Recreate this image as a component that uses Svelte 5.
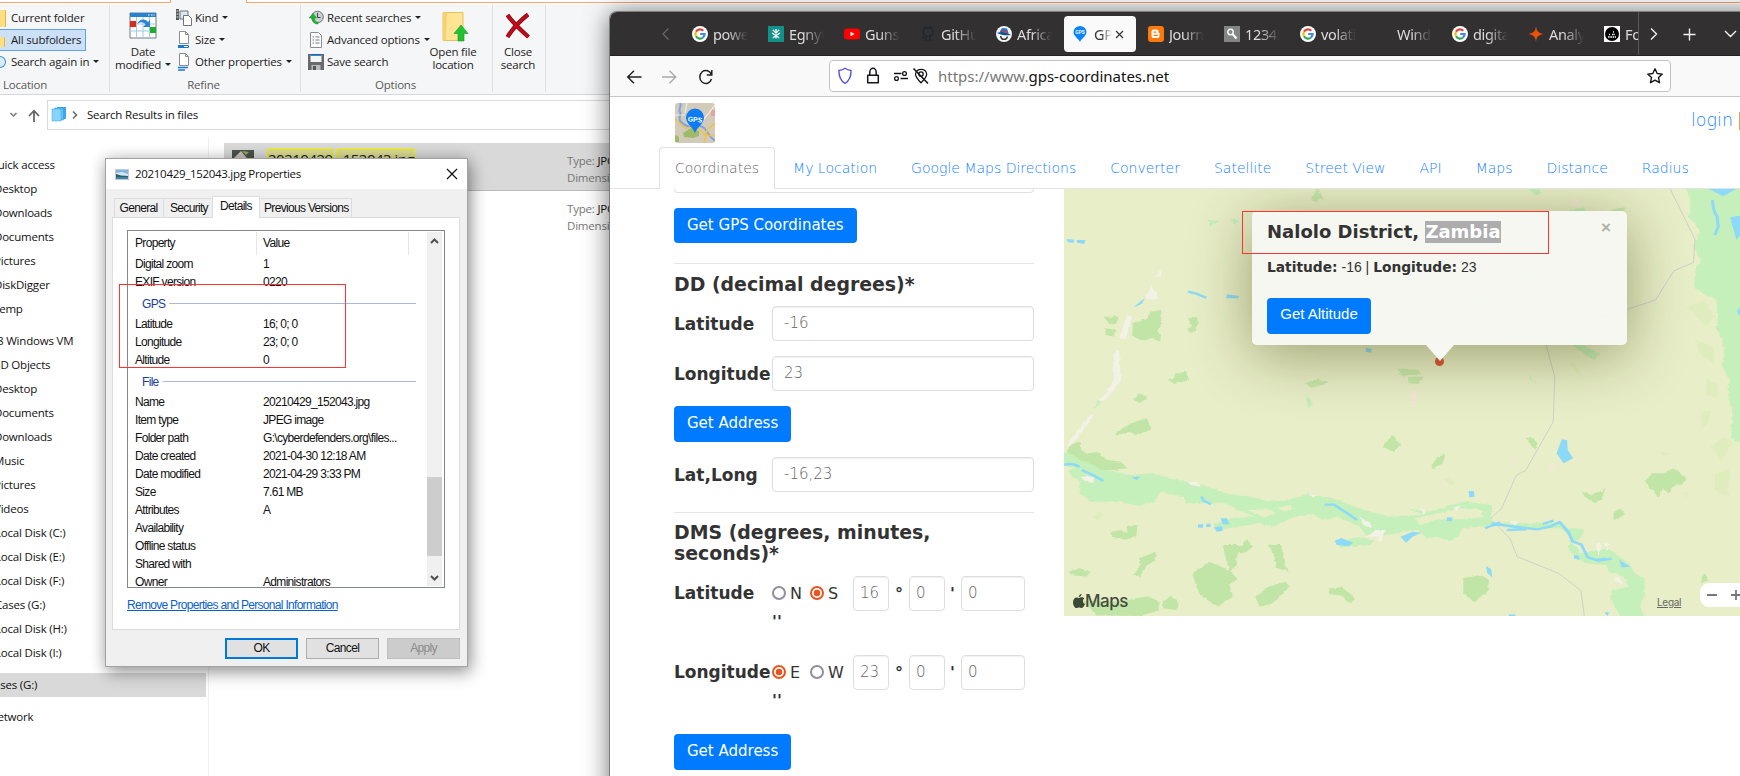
<script>
  const sidebar = [
    { t: 'Quick access', l: -11 }, { t: 'Desktop', l: -6 }, { t: 'Downloads', l: -6 }, { t: 'Documents', l: -6 },
    { t: 'Pictures', l: -6 }, { t: 'DiskDigger', l: -6 }, { t: 'Temp', l: -7 },
    { t: '8 Windows VM', l: -3, lead: true }, { t: '3D Objects', l: -6 }, { t: 'Desktop', l: -6 }, { t: 'Documents', l: -6 },
    { t: 'Downloads', l: -6 }, { t: 'Music', l: -6 }, { t: 'Pictures', l: -6 }, { t: 'Videos', l: -6 },
    { t: 'Local Disk (C:)', l: -5 }, { t: 'Local Disk (E:)', l: -5 }, { t: 'Local Disk (F:)', l: -5 }, { t: 'Cases (G:)', l: -5 },
    { t: 'Local Disk (H:)', l: -5 }, { t: 'Local Disk (I:)', l: -5 },
    { t: 'Cases (G:)', l: -13, lead: true, sel: true }, { t: 'Network', l: -11, lead: true }
  ];
  const fileProps = [
    ['Name', '20210429_152043.jpg'], ['Item type', 'JPEG image'], ['Folder path', 'G:\\cyberdefenders.org\\files...'],
    ['Date created', '2021-04-30 12:18 AM'], ['Date modified', '2021-04-29 3:33 PM'], ['Size', '7.61 MB'],
    ['Attributes', 'A'], ['Availability', ''], ['Offline status', ''], ['Shared with', ''], ['Owner', 'Administrators']
  ];
  const gpsProps = [['Latitude', '16; 0; 0'], ['Longitude', '23; 0; 0'], ['Altitude', '0']];
  const tabs = [
    ['google', 'power'], ['egnyte', 'Egnyt'], ['youtube', 'Guns a'], ['github', 'GitHub'], ['africa', 'Africa'], ['gps', 'GPS'],
    ['blogger', 'Journa'], ['search', '12345'], ['google', 'volatil'], ['none', 'Windo'], ['google', 'digital'], ['spark', 'Analys'], ['face', 'For']
  ];
  const nav = ['Coordinates', 'My Location', 'Google Maps Directions', 'Converter', 'Satellite', 'Street View', 'API', 'Maps', 'Distance', 'Radius'];
  const dms = [
    { label: 'Latitude', a: 'N', b: 'S', first: false, deg: '16' },
    { label: 'Longitude', a: 'E', b: 'W', first: true, deg: '23' }
  ];
</script>

{#snippet caret()}<i class="caret"></i>{/snippet}
{#snippet page(kind)}
  <svg width="16" height="18" viewBox="0 0 16 18">
    <path d="M3.500 .5h6l3 3v9h-9z" fill="#fff" stroke="#8a8f94" />
    <path d="M9.500 .5v3h3" fill="none" stroke="#8a8f94" />
    {#if kind === 'size'}<path d="M2.500 14.500h10v2h-10z" fill="#fff" stroke="#1979ca" /><path d="M2 14h6v3H2z" fill="#1979ca" />{/if}
    {#if kind === 'other'}<path d="M2 14.500h10M2 17h7" stroke="#1979ca" stroke-width="1.300" />{/if}
  </svg>
{/snippet}

<div class="screen">
  <section class="explorer">
    <div class="topline"><span class="la"></span><span class="notch"></span><span class="lb"></span></div>
    <div class="ribbon">
      <div class="group loc">
        <div class="col">
          <div class="rb"><i class="fold"></i>Current folder</div>
          <div class="rb on"><i class="fold low"></i>All subfolders</div>
          <div class="rb"><i class="lens"></i>Search again in {@render caret()}</div>
        </div>
        <footer>Location</footer>
      </div>
      <div class="group refine">
        <div class="cols">
          <div class="big">
            <svg width="28" height="28" viewBox="0 0 28 28">
              <path d="M1 1h26v25H1z" fill="#fff" stroke="#75797d" /><path d="M1 1h26v4H1z" fill="#2384d1" />
              <path d="M19 3h1.500M22 3h1.500M24.500 3h1" stroke="#fff" />
              <path d="M7.500 5v21M14 5v21M20.500 5v21M1 12h26M1 19h26" stroke="#9fcbe6" />
              <path d="M1 9h6v6H1z" fill="#dc2a20" /><path d="M21 15h6v6h-6z" fill="#1cae31" />
              <path d="M8 12c2-5 8-6 11-2l2-2v7h-7l2.500-2.500c-2-3-5-3-8.500-.5z" fill="#2b83d3" />
            </svg>
            <span>Date</span><span>modified {@render caret()}</span>
          </div>
          <div class="col">
            <div class="rb"><svg width="16" height="18" viewBox="0 0 16 18"><path d="M0 0h3v11H0z" fill="#555" /><path d="M.5 2h2M.5 5h2M.5 8h2" stroke="#ddd" /><path d="M4 2h8v8H4z" fill="#dbe8f2" stroke="#6d747a" /><path d="M7.500 6.500h5l3 3v7h-8z" fill="#fff" stroke="#6d747a" /></svg>Kind {@render caret()}</div>
            <div class="rb">{@render page('size')}Size {@render caret()}</div>
            <div class="rb">{@render page('other')}Other properties {@render caret()}</div>
          </div>
        </div>
        <footer>Refine</footer>
      </div>
      <div class="group opts">
        <div class="cols">
          <div class="col">
            <div class="rb"><svg width="16" height="16" viewBox="0 0 16 16"><circle cx="9.500" cy="7" r="5.800" fill="#c9cfd2" stroke="#6c7478" /><path d="M9.500 3v4.500h3" fill="none" stroke="#444" /><path d="M10 14c-4 0-6-2.500-6-6H1.200L5 3.500 8.500 8H6.300c0 3 1.700 4 3.700 4.500z" fill="#20b52e" stroke="#108a1c" stroke-width=".5" /></svg>Recent searches {@render caret()}</div>
            <div class="rb"><svg width="16" height="18" viewBox="0 0 16 18"><path d="M2.500 1.500h8l3 3v12h-11z" fill="#fff" stroke="#8a8f94" /><path d="M4.500 6h1.500M4.500 9h1.500M4.500 12h1.500M7.500 6h4M7.500 9h4M7.500 12h4" stroke="#777" /></svg>Advanced options {@render caret()}</div>
            <div class="rb"><svg width="16" height="16" viewBox="0 0 16 16"><path d="M0 0h16v16H0z" fill="#68696c" /><path d="M2.500 1h11v7h-11z" fill="#f4f4f4" /><path d="M2.500 0h11v1.800h-11z" fill="#1569b5" /><path d="M3.500 11h9v5h-9z" fill="#b9bbbd" /><path d="M5 12h3v4H5z" fill="#555" /></svg>Save search</div>
          </div>
          <div class="big open">
            <svg width="28" height="32" viewBox="0 0 28 32"><path d="M2 1.500h20v28H2z" fill="#ffe593" stroke="#e7c25c" /><path d="M2 1.500h4l-1 28H2z" fill="#f5d26f" /><path d="M20 14l7 8.500h-4V30h-6v-7.500h-4z" fill="#21c42f" stroke="#18942a" stroke-width=".6" /></svg>
            <span>Open file</span><span>location</span>
          </div>
        </div>
        <footer>Options</footer>
      </div>
      <div class="group close">
        <div class="big">
          <svg width="28" height="28" viewBox="0 0 28 28"><path d="M3.500 3c4 6 12 14 21 22M24 2.500C17 8 9 16 3.500 25" fill="none" stroke="#7d0d16" stroke-width="4.200" /><path d="M3.500 3c4 6 12 14 21 22M24 2.500C17 8 9 16 3.500 25" fill="none" stroke="#c9081a" stroke-width="2.600" /></svg>
          <span>Close</span><span>search</span>
        </div>
      </div>
    </div>
    <div class="addr">
      <svg width="47" height="30" viewBox="0 0 47 30"><path d="M10.500 13l3 3 3-3" fill="none" stroke="#777" stroke-width="1.500" /><path d="M34 22V11M29 16l5-5.300L39 16" fill="none" stroke="#666" stroke-width="1.800" /></svg>
      <div class="box">
        <svg width="16" height="16" viewBox="0 0 16 16"><path d="M6 1h9v12H6z" fill="#3aa7ea" /><path d="M3.500 2h9v12h-9z" fill="#62c3f5" stroke="#2c97da" stroke-width=".5" /><path d="M1 3h9v12H1z" fill="#86d4fb" stroke="#3aa0dc" stroke-width=".5" /></svg>
        <svg width="10" height="12" viewBox="0 0 10 12"><path d="M3 2.500L6.500 6 3 9.500" fill="none" stroke="#666" stroke-width="1.500" /></svg>
        <span>Search Results in files</span>
      </div>
    </div>
    <div class="main">
      <nav class="side">
        {#each sidebar as s}
          <div class="item" class:lead={s.lead} class:sel={s.sel}><span style="margin-left:{s.l}px">{s.t}</span></div>
        {/each}
      </nav>
      <div class="files">
        <div class="row sel">
          <svg width="22" height="40" viewBox="0 0 22 40"><path d="M0 0h22v40H0z" fill="#4d5446" /><path d="M1 9L9 1l10 12v27H0z" fill="#c9c3c0" /><path d="M10 1l4 4 3-3z" fill="#8bab66" /></svg>
          <div class="name"><mark>20210429</mark><mark>_152043.jpg</mark></div>
          <div class="meta"><p>Type: <b>JPG File</b></p><p>Dimensions: </p></div>
        </div>
        <div class="row"><div class="meta"><p>Type: <b>JPG File</b></p><p>Dimensions: </p></div></div>
      </div>
    </div>
  </section>

  <section class="dialog">
    <header>
      <svg width="14" height="11" viewBox="0 0 14 11"><path d="M0 0h14v11H0z" fill="#c6cbd0" /><path d="M1 1h12v9H1z" fill="#7fb6e6" /><path d="M1 4l6-1 6 2v2H1z" fill="#d5e6f2" /><path d="M1 5l5 1.500 7 .5v1.500H1z" fill="#2c5f57" /><path d="M1 8h12v2H1z" fill="#3c83b5" /></svg>
      <span>20210429_152043.jpg Properties</span>
      <svg width="12" height="12" viewBox="0 0 12 12"><path d="M1 1l10 10M11 1L1 11" stroke="#111" stroke-width="1.200" /></svg>
    </header>
    <div class="dtabs"><span>General</span><span>Security</span><span class="act">Details</span><span>Previous Versions</span></div>
    <div class="sheet">
      <div class="list">
        <div class="content">
          <div class="pr head"><span>Property</span><span>Value</span></div>
          <div class="pr"><span>Digital zoom</span><span>1</span></div>
          <div class="pr cut"><span>EXIF version</span><span>0220</span></div>
          <div class="cat"><span>GPS</span><i></i></div>
          {#each gpsProps as [k, v]}<div class="pr"><span>{k}</span><span>{v}</span></div>{/each}
          <div class="cat file"><span>File</span><i></i></div>
          {#each fileProps as [k, v]}<div class="pr"><span>{k}</span><span>{v}</span></div>{/each}
        </div>
        <div class="scroll">
          <svg width="15" height="18" viewBox="0 0 15 18"><path d="M4 11l3.500-3.500L11 11" fill="none" stroke="#505050" stroke-width="2" /></svg>
          <i></i>
          <svg width="15" height="18" viewBox="0 0 15 18"><path d="M4 8l3.500 3.500L11 8" fill="none" stroke="#505050" stroke-width="2" /></svg>
        </div>
      </div>
      <span class="link">Remove Properties and Personal Information</span>
    </div>
    <div class="btns"><span class="ok">OK</span><span>Cancel</span><span class="dis">Apply</span></div>
    <div class="mark-gps"></div>
  </section>

  <section class="browser">
    <div class="tabbar">
      <svg class="prev" width="12" height="16" viewBox="0 0 12 16"><path d="M8.500 2.500L3 8l5.500 5.500" fill="none" stroke="#6a6768" stroke-width="1.300" /></svg>
      {#each tabs as [icon, label]}
        <div class="tab" class:active={icon === 'gps'}>
          <svg width="16" height="16" viewBox="0 0 16 16">
            {#if icon === 'google'}
              <circle cx="8" cy="8" r="8" fill="#fff" />
              <g fill="none" stroke-width="2.200"><path d="M4 5.700A4.600 4.600 0 0 1 11.300 4.700" stroke="#ea4335" /><path d="M4 5.700a4.600 4.600 0 0 0 0 4.600" stroke="#fbbc05" /><path d="M4 10.300a4.600 4.600 0 0 0 7 1.200" stroke="#34a853" /><path d="M8.200 8h4.400a4.600 4.600 0 0 1-1.600 3.500" stroke="#4285f4" /></g>
            {:else if icon === 'egnyte'}
              <path d="M0 0h16v16H0z" fill="#12918b" /><path d="M8 3v2.500M8 12.500V9.500L4 7M8 9.500L12 7M4.800 3.800L8 7l3.200-3.200M4.800 12L8 9.500l3.200 2.500" fill="none" stroke="#fff" stroke-width="1.300" />
            {:else if icon === 'youtube'}
              <rect y="2.500" width="16" height="11" rx="3" fill="#f00" /><path d="M6.500 5.800v4.400L10.500 8z" fill="#fff" />
            {:else if icon === 'github'}
              <path d="M6 15v-2.500c-3 .5-2.500-1.500-4-2M10 15v-3c0-1-.3-1.400-.7-1.800 4-.5 4.500-5 2.500-6.700.2-1 0-1.700-.3-2.300-1 0-1.700.6-2.300 1H6.800c-.6-.4-1.300-1-2.300-1-.3.600-.5 1.300-.3 2.300-2 1.700-1.500 6.200 2.500 6.700-.4.400-.7 1-.7 1.800" fill="none" stroke="#24272b" stroke-width="1.700" />
            {:else if icon === 'africa'}
              <circle cx="8" cy="8" r="8" fill="#f3f6f8" /><path d="M3.500 6L6 2l5 .5L12.500 7z" fill="#2275c9" /><path d="M1 7c4-2 10-1 14 2-4 .5-10 .5-14-2z" fill="#15508f" /><path d="M4.500 10c1 4.500 6 4.500 7 .5" fill="none" stroke="#333" stroke-width="1.300" /><path d="M5 5l7 2v-1.200L5.500 4z" fill="#d33" />
            {:else if icon === 'gps'}
              <path d="M8 16C6 12 1.500 10 1.500 6A6.500 6 0 0 1 14.500 6C14.500 10 10 12 8 16z" fill="#0a84ff" /><text x="8" y="8" font-size="4.500" font-weight="700" text-anchor="middle" fill="#fff">GPS</text>
            {:else if icon === 'blogger'}
              <rect width="16" height="16" rx="3" fill="#ff7a0c" /><path d="M5.500 3.500h3a2 2 0 0 1 2 2V6c0 .5.300.8 1 1v3a2 2 0 0 1-2 2h-4a2 2 0 0 1-2-2V5.500a2 2 0 0 1 2-2z" fill="#fff" /><path d="M6 6.200h2M6 9.400h3.300" stroke="#ff7a0c" stroke-width="1.200" stroke-linecap="round" />
            {:else if icon === 'search'}
              <path d="M0 0h16v16H0z" fill="#858585" /><circle cx="6.500" cy="6" r="2.700" fill="none" stroke="#fff" stroke-width="1.400" /><path d="M8.500 8l4 4.500" stroke="#fff" stroke-width="2" />
            {:else if icon === 'spark'}
              <path d="M8 0c.6 5 2 7 7.500 8C10 9 8.600 11 8 16 7.400 11 6 9 .5 8 6 7 7.400 5 8 0z" fill="#ee5007" />
            {:else if icon === 'face'}
              <path d="M0 0h16v16H0z" fill="#fff" /><circle cx="8" cy="8" r="7" fill="#000" /><path d="M4 11h8M5 8.500h1M8 8.500h3M9 6h1" stroke="#fff" stroke-width="1.600" stroke-dasharray="1.600 .7" />
            {/if}
          </svg>
          <span>{label}</span>
          {#if icon === 'gps'}<svg class="x" width="9" height="9" viewBox="0 0 9 9"><path d="M1 1l7 7M8 1L1 8" stroke="#333" stroke-width="1.200" /></svg>{/if}
        </div>
      {/each}
      <div class="tabend">
        <svg width="101" height="43" viewBox="0 0 101 43"><path d="M12 16.500l5.500 5.500-5.500 5.500M44.500 22.500h12M50.500 16.500v12M86 19l5.500 5.500L97 19" fill="none" stroke="#f2f2f2" stroke-width="1.400" /></svg>
      </div>
    </div>
    <div class="toolbar">
      <svg class="navs" width="92" height="18" viewBox="0 0 92 18"><g fill="none" stroke-width="1.400"><path d="M15.500 9H2M8 2.800L1.700 9 8 15.200" stroke="#222" /><path d="M36 9h13.500M43.500 2.800L49.800 9l-6.300 6.200" stroke="#aaa" /><path d="M85.500 7a6 6.500 0 1 0 0 4M85.800 2v5h-5" stroke="#222" stroke-width="1.500" /></g></svg>
      <div class="url">
        <svg width="96" height="20" viewBox="0 0 96 20">
          <path d="M8 2.300c2 1.500 4 2 6 2.200.3 6-1.500 10-6 13-4.500-3-6.300-7-6-13 2-.2 4-.7 6-2.200z" fill="none" stroke="#5553d6" stroke-width="1.400" />
          <path d="M30.700 9.200h10.600v7.500H30.700zM32.800 9V6a3.200 3.700 0 0 1 6.400 0v3" fill="none" stroke="#15141a" stroke-width="1.500" stroke-linejoin="round" />
          <g fill="none" stroke="#15141a" stroke-width="1.300"><path d="M57 7.500h7.500M63.500 12.500H71" /><circle cx="67.500" cy="7.500" r="1.900" /><circle cx="59.500" cy="12.500" r="1.900" />
          <path d="M84 16.800c-3-3-5.500-5.500-5.500-8.800a5.700 5.700 0 0 1 11.200 0c0 3.300-2.700 5.800-5.700 8.800z" /><circle cx="84" cy="8" r="2.200" /><path d="M76.500 2.500l14.500 15" stroke-width="1.600" /></g>
        </svg>
        <span class="addr-text">https://www.<b>gps-coordinates.net</b></span>
        <svg width="18" height="18" viewBox="0 0 18 18"><path d="M9 1.800l2.200 4.700 5.100.6-3.800 3.500 1 5.100L9 13.200l-4.500 2.500 1-5.100L1.700 7.100l5.100-.6z" fill="none" stroke="#15141a" stroke-width="1.400" stroke-linejoin="round" /></svg>
      </div>
    </div>

    <div class="web">
      <div class="brand">
        <svg width="40" height="40" viewBox="0 0 40 40">
          <rect width="40" height="40" rx="3" fill="#d2cbb9" />
          <path d="M8 30l8-5 8 3v5l-6 2-9-1zM0 32l4 2v5H0z" fill="#9dbb6b" /><path d="M36 7h4v6h-4z" fill="#e2a49c" />
          <path d="M5 0c2 4-2 6 0 9s-3 6 1 10 8 5 12 5 8-3 12 2 3 6 10 12" fill="none" stroke="#7ba2e6" stroke-width="2" /><path d="M0 16l10 9 12-1 8 8 9 1M40 20l-8 7-3 13" fill="none" stroke="#edc24c" stroke-width="1.600" /><path d="M40 2L26 20M0 12h10M12 0l-2 10" stroke="#fff" stroke-width="1.200" opacity=".7" />
          <path d="M20 30c-2-6-9-9-9-15.500a9 9 0 0 1 18 0C29 21 22 24 20 30z" fill="#0d7cf4" /><text x="20" y="19" font-size="7" font-weight="700" text-anchor="middle" fill="#fff" transform="rotate(6 20 17)">GPS</text>
        </svg>
        <span class="login">login</span><i></i>
      </div>
      <div class="nav">{#each nav as n, i}<span class:cur={i === 0}>{n}</span>{/each}</div>
      <div class="cols2">
        <div class="form">
          <div class="stub"></div>
          <span class="btn b1">Get GPS Coordinates</span>
          <hr />
          <h4>DD (decimal degrees)*</h4>
          <div class="fr"><label for="lat">Latitude</label><div class="in" id="lat">-16</div></div>
          <div class="fr"><label for="lng">Longitude</label><div class="in" id="lng">23</div></div>
          <span class="btn b2">Get Address</span>
          <div class="fr"><label for="ll">Lat,Long</label><div class="in" id="ll">-16,23</div></div>
          <hr class="h2" />
          <h4 class="two">DMS (degrees, minutes, seconds)*</h4>
          {#each dms as d}
            <div class="dms">
              <strong>{d.label}</strong>
              <div class="vals">
                <i class="radio" class:on={d.first}></i><span class="c1">{d.a}</span><i class="radio" class:on={!d.first}></i><span class="c2">{d.b}</span>
                <div class="in s">{d.deg}</div><b class="u1">°</b><div class="in s">0</div><b class="u2">'</b><div class="in s w">0</div>
                <b class="sec">''</b>
              </div>
            </div>
          {/each}
          <span class="btn b3">Get Address</span>
        </div>
        <div class="map">
          <svg class="land" viewBox="9 27 1559 1281" preserveAspectRatio="none">
            <filter id="rough" x="0" y="0" width="1" height="1"><feTurbulence type="fractalNoise" baseFrequency=".09" numOctaves="2" seed="4" /><feDisplacementMap in="SourceGraphic" scale="9" xChannelSelector="R" yChannelSelector="G" /></filter>
            <path d="M9 27h1559v1281H9z" fill="#e8eec8" />
            <g filter="url(#rough)">
            <path d="M-20 0h1620v1340H-20z" fill="#e8eec8" />
            <g fill="#c5efbb">
              <path d="M1437 0H1600V810L1548 775 1550 690 1540 640 1545 600 1528 560 1532 500 1515 450 1515 360 1490 345 1462 325 1465 270 1478 240 1462 200 1475 150 1450 110 1455 65z" />
              <path d="M-10 820L30 815 70 850 110 870 160 885 215 880 270 900 330 915 380 940 440 950 480 965 525 960 570 942 630 955 700 990 760 1010 830 1005 860 1000 900 975 935 965 995 975 995 1005 1000 1030 1130 1030 1155 1025 1170 1045 1205 1045 1208 1060 1195 1080 1180 1085 1200 1120 1265 1105 1310 1150 1325 1180 1348 1195 1348 1240 1338 1280 1352 1330 1300 1330 1268 1250 1275 1230 1310 1220 1300 1190 1265 1175 1260 1155 1210 1150 1190 1130 1170 1105 1180 1075 1155 1045 1100 1045 1010 1035 930 1045 915 1070 900 1085 870 1070 845 1075 825 1050 790 1055 750 1065 710 1070 690 1040 640 1010 600 1015 585 1000 540 1010 490 1040 460 1030 410 1040 360 1050 355 1030 400 1015 450 1010 410 990 380 970 320 965 290 970 285 950 230 935 220 965 180 978 140 965 70 965 45 940 45 905 20 880 30 860 -10 850z" />
              <path d="M635 1085L690 1072 725 1080 715 1095 650 1102zM800 985L850 995 900 980 900 995 840 1005zM565 640l18 30-8 15zM1080 27h22l8 14-12 5zM340 120l28 2-22 18zM395 118l20 5-12 12zM1085 580l5 25 15 12-20-18zM73 690l15-30 8 5zM940 345l30-5 30 20 0 25-20 2zM1003 465l40-8 30 8 60-2-30 22-100-5zM1140 455l30 0 20 30 30 20 25 15-15 20-30-25-30-35zM1175 90l35-8 8 30-10 35-15-2zM1072 260l25 30-8 35zM290 960l50-5 10 10-40 8zM580 1000l50 0 5 12-30 8z" />
            </g>
            <path d="M820 1015l50-15 60-15 40 10 10 15-40 8-70 0-40 18zM430 990l50-2 20 12-30 12zM930 990l30-5 20 12-30 8zM500 985l30-10 10 10-20 10z" fill="#e8eec8" />
            <g fill="#c1e5a6">
              <path d="M20 795l25-10 5 30 20 5 15-5 25 25 30 5 15 20-30 5-30 0-25-20-25-10-30-25z" /><path d="M168 430l35-15 5-20 25-5 0 45-10 20 10 10 -2 20-20-10-20 8-25-15zM100 410l35 0-5 20-15 5zM105 445l25 5-5 20-20-5zM295 415l20-5 5 20-8 15 5 5-18 8-5-10 10-10zM252 600l18-20 20-5 8 25-35 12zM168 655l15-15 20 12-20 18zM130 755l40-30 30-10 12 35-40 15-10-10-30 12z" />
              <path d="M745 800l20-35 10 15 12 15-20 20zM855 860l15-30 18-5-5 25-15 10-5 8zM1073 770l20 2 8 20-8 18zM1350 905l15-25 30 0 20-17 30 35-10 15-20 5 -10 20-15 -10 -10 25-15-25zM1202 935l25 10 30-17-8 30-15 12-20-15zM1275 995l20-10 8 20-25 15z" />
              <path d="M118 1055l20-5 18 10 -3-18 25-8-2 35-25 10-30-8zM170 1185l15-30-3-20 40-20-3 25-20 20-15 30zM305 1180l40-35 45 25-10-45-5-30 45 0 10-20 15 25-20 20-15 0-5 35-10 20 15 25-20 10 8 40-35 30-40-35-10-30zM480 1095l30 0 8 60 10 20-30-12-5-40zM450 1250l30-30 40-15 10 15-40 50-30 10zM930 1195l40-10 20 15-5 35-30 30-25-25zM1480 1190l10-10 5 25-15 5zM620 1225l30-3 30 30-10 20-20-25-30-5zM20 1175l25-10 25 10-10 15-35-5zM50 1262l90 2 60-15 30 15-3 30-50 14-90-2zM235 1265l20-15 20 15-5 25-35-5z" />
              <path d="M578 60l15-35 18 35-12-5-8 12zM778 565l50 5 5 12-45 5zM800 590l40 0-15 22-18-2zM565 610l30-12 25 8-40 18zM1270 90l30-8 5 12-20 6z" opacity=".85" />
            </g>
            <g fill="#dfedbe"><path d="M1480 700l20-10-5 40-15 20zM1500 800l30-30 20 15-25 60zM1510 880l35-10-5 80-30-20zM1465 480l40 20 5 50-30-20zM75 1010l15-15 10 10-10 15zM885 895l15 0 10 18-15 0zM1380 815l25 5-12 8zM1175 545l12 5 15 35-15-10zM1490 595l30 20-5 40-25-10zM1445 380l40-20 25 50-20 30zM1435 940l15-5-5 22z" /></g>
            <g fill="#f4f1e6">
              <path d="M14 800l12-25 42-70 8 5-40 70-15 20zM90 660l15-20 20-40-3-30 4-60 10 0 5 90-30 50-15 15zM136 475l18-70 12 5-15 68zM195 355l17-40 15 38-12 8zM218 290l15-20 0 20zM295 905l20 0 10 15-25-5zM45 890l30 0 5 20-20-5zM570 940l25 8-10 5zM830 985l15 5-5 15zM690 1010l20 15 10 20-20-10zM1040 1022l15 0 0 10h-15zM1235 1095l10-8 5 15-8 25zM1255 1088l10 5-5 20zM730 1050l20 0-10 35-8-5 5-12-35 4zM1280 1188l10 5 10 20-20-10zM905 985l20-10-10 18z" />
            </g>
            <path d="M798 650l25-22-5 62-15-35zM1035 840l20 5-5 18zM1130 855l25-5-20 30zM1178 58l18 0 2 25-20-5z" fill="#f1ead2" />
            </g>
            <g fill="none" stroke="#c9cbcc" stroke-width="2.200"><path d="M1407 27l57 150-3 70-45 25-43 88-65 28-165 63-22 45 20 95-4 135-63 145-22 15-34 100-24 28M1000 1025l38 52 16 53 96 50 51 52 8 76" /></g>
            <g fill="#8cdaf8">
              <path d="M1145 820l12-42 12 2 2 30 12 25-22 15zM942 933l12 0 2 17-12 2zM633 1082l15-8 28 14-10 10-28-3zM785 1070l28-15 20 3-20 12-15 18zM15 177l18 2-3 10-12-3zM38 180l20 0-2 12-17-4zM385 343l28 5-3 7h-27zM705 503l14 3-2 12-12-3zM165 892l20-3-8 12zM370 1015l15 0 5 18-15 0zM355 1042l18-4 3 14-15 3zM318 1033l12 0v10h-12zM337 1031l10 0v10h-10zM893 1012l12 0-2 12-12-2zM1290 1140l25 20-20 2zM982 1158l12 10 3 25-12-15zM1497 27h62l-30 22zM1545 112l23-5v60l-8 13-10-45zM172 378l24-24-8 18-16 8zM1561 395l7-15v28zM1185 1125l12 3 0 12-12-5zM1255 1297l12 0-5 11zM1035 1303l15 0 0 5h-15z" />
            </g>
            <g fill="none" stroke="#8cdaf8" stroke-width="7" stroke-linejoin="round">
              <path d="M9 855q20-8 36 6M50 870l25 15 25 18M326 950l5 12 17 11M610 974l22 0 35 30 18 16M995 1030l40 8 65 10 30-8 22-14 20 30 10 28 20 10 15 38 25 10 30-6M980 1045l35-18M1030 1050l45-2M1113 1032l25-10M1240 1140l18-4M295 335l20 6 22 12M1505 60q0 30 10 50l3 30-8 25" />
            </g>
            <g fill="#8cdaf8" opacity=".5"><path d="M885 215l18 5-5 12zM1065 210l8 0-2 30-8-5zM755 240l20-4 15 8-20 8z" /></g>
          </svg>
          <div class="pin"></div>
          <div class="pop">
            <h5>Nalolo District, <em>Zambia</em></h5>
            <p><b>Latitude:</b> -16 | <b>Longitude:</b> 23</p>
            <span class="alt">Get Altitude</span>
            <i class="px">×</i>
          </div>
          <div class="redbox"></div>
          <div class="amaps">
            <svg width="12" height="15" viewBox="0 0 12 15"><path d="M8.500 0c.1 1.600-1.200 3-2.700 3C5.700 1.600 7 .2 8.500 0zM6 4c.7 0 1.500-.7 2.900-.7 1.200 0 2 .6 2.500 1.300-2.300 1.400-1.800 4.600.6 5.500-.6 1.600-1.800 4-3.300 4-1 0-1.400-.6-2.600-.6s-1.600.6-2.500.6C1.700 14.100 0 11.200 0 8.200c0-3 1.900-4.800 3.600-4.800C4.700 3.400 5.500 4 6 4z" fill="#3a4a35" /></svg>Maps
          </div>
          <span class="legal">Legal</span>
          <div class="zoomer"><svg width="40" height="24" viewBox="0 0 40 24"><path d="M7 12h10M31 12h12M36 7v10" stroke="#777" stroke-width="1.800" /></svg></div>
        </div>
      </div>
    </div>
  </section>
</div>

<style>
  :global(body) { margin: 0; overflow: hidden; background: #fff; }
  * { box-sizing: border-box; }
  p, h4, h5 { margin: 0; }
  svg { display: block; flex: none; }
  .screen { position: relative; width: 1740px; height: 776px; overflow: hidden; background: #fff; }
  .explorer { font: 11.500px/16px "Open Sans", "Noto Sans", sans-serif; letter-spacing: -.2px; color: #222; width: 1740px; height: 776px; }
  .topline { display: flex; height: 4px; background: #fff; }
  .la { width: 171px; border-bottom: 1px solid #f9a36c; border-right: 1px solid #f9a36c; height: 3px; }
  .notch { width: 75px; background: #f5f6f7; }
  .lb { flex: 1; height: 3px; border-bottom: 1px solid #f9a36c; border-left: 1px solid #f9a36c; }
  .ribbon { display: flex; height: 91px; background: #f5f6f7; border-bottom: 1px solid #d6d7d8; white-space: nowrap; }
  .group { display: flex; flex-direction: column; border-right: 1px solid #dfe0e1; height: 87px; margin-top: 1px; }
  .group footer { margin-top: auto; height: 15px; line-height: 15px; text-align: center; color: #5a5a5a; }
  .loc { width: 110px; }
  .loc footer { width: 50px; }
  .refine { width: 191px; }
  .refine footer { padding-right: 3px; }
  .opts { width: 192px; }
  .opts footer { padding-right: 2px; }
  .close { width: 53px; align-items: center; }
  .cols { display: flex; }
  .col { padding-top: 2px; }
  .rb { height: 22px; display: flex; align-items: center; gap: 3px; }
  .rb.on { width: 86px; background: #cce1f8; border: 1px solid #62a2e4; border-left: 0; }
  .loc .rb { gap: 5px; }
  .loc .caret { margin-left: -1px; }
  .fold { width: 6px; height: 17px; background: #ffdf82; border-right: 1px solid #e2b84c; }
  .fold.low { height: 10px; width: 5px; margin-right: 1px; align-self: flex-end; margin-bottom: 3px; }
  .lens { width: 6px; height: 12px; border: 1.500px solid #3f8fce; border-left: 0; border-radius: 0 6px 6px 0; background: #d7ecfa; }
  .caret { display: inline-block; border: 3px solid transparent; border-top-color: #222; border-bottom: 0; margin: 0 0 2px 1px; vertical-align: middle; }
  .big { display: flex; flex-direction: column; align-items: center; line-height: 13px; padding-top: 7px; }
  .big svg { margin-bottom: 5px; }
  .refine .big { width: 66px; }
  .open { width: 60px; margin-left: 1px; margin-right: auto; padding-top: 6px; }
  .open svg { margin-bottom: 2px; margin-left: 3px; }
  .opts .col { width: 127px; padding-left: 7px; }
  .opts .open { margin-left: -5px; }
  .close .big { margin-left: -2px; }
  .addr { display: flex; padding-top: 5px; height: 42px; }
  .box { flex: 1; height: 30px; border: 1px solid #d9d9d9; display: flex; align-items: center; padding-left: 3px; color: #111; }
  .box svg:nth-child(2) { margin: 0 7px 0 3px; }
  .box svg:first-child { margin-top: -3px; }
  .main { display: flex; height: 639px; }
  .side { width: 209px; border-right: 1px solid #f0f0f0; padding-top: 16px; color: #111; }
  .item { height: 24px; line-height: 24px; width: 206px; overflow: hidden; white-space: nowrap; }
  .item.lead { margin-top: 8px; }
  .item.sel { background: #d9d9d9; }
  .files { flex: 1; padding: 6px 0 0 15px; overflow: hidden; }
  .row { display: flex; height: 48px; position: relative; padding: 7px 0 0 343px; }
  .row.sel { background: #d9d9d9; border-bottom: 1px solid #b9b9b9; padding-left: 8px; }
  .name { margin: -2px 0 0 13px; display: flex; gap: 2px; font: 15px/20px "Open Sans", sans-serif; letter-spacing: -.5px; width: 300px; }
  .name mark { background: #dcdc90; border: 1px solid #f4f400; border-radius: 3px; color: #222; height: 22px; }
  .meta { color: #777; line-height: 17px; padding-top: 2px; white-space: nowrap; width: 100px; }
  .meta b { color: #111; font-weight: 400; }

  .dialog { position: absolute; left: 105px; top: 158px; width: 363px; height: 509px; background: #f0f0f0; border: 1px solid #a2a2a2; box-shadow: 3px 6px 16px rgba(0,0,0,.33), 0 0 14px rgba(0,0,0,.18); font: 12px/18px "Liberation Sans", Arial, sans-serif; color: #111; letter-spacing: -.68px; white-space: nowrap; }
  .dialog header { background: #fff; height: 30px; display: flex; align-items: center; padding: 0 9px 0 9px; font: 11.500px "Open Sans", sans-serif; letter-spacing: -.3px; }
  .dialog header span { margin: -1px auto 0 6px; }
  .dtabs { display: flex; align-items: flex-end; height: 28px; padding-left: 8px; }
  .dtabs span { height: 19px; line-height: 18px; padding: 0 4.500px; border: 1px solid #dcdcdc; border-width: 1px 1px 0 1px; }
  .dtabs span:first-child { width: 49px; border-right: 0; }
  .dtabs span:nth-child(2) { width: 49px; padding-left: 6px; border-right: 0; }
  .dtabs span.act { height: 22px; width: 48px; line-height: 19px; padding-left: 7px; background: #fff; margin-bottom: -1px; position: relative; }
  .dtabs span:last-child { width: 92px; border-left: 0; padding-left: 4px; }
  .sheet { margin: 0 7px 0 6px; height: 413px; background: #fff; border: 1px solid #dcdcdc; padding: 12px 0 0 14px; }
  .list { width: 318px; height: 358px; border: 1px solid #828790; display: flex; overflow: hidden; }
  .content { flex: 1; padding-left: 7px; height: 356px; overflow: hidden; }
  .pr { display: flex; height: 18px; }
  .pr span:first-child { width: 128px; }
  .pr.head { height: 24px; padding-top: 3px; background: linear-gradient(#e5e5e5,#e5e5e5) 121px 1px / 1px 23px no-repeat, linear-gradient(#e5e5e5,#e5e5e5) 273px 1px / 1px 23px no-repeat; }
  .pr.cut { overflow: hidden; height: 14px; }
  .cat { display: flex; align-items: center; height: 28px; padding: 5px 11px 0 7px; color: #1c3d9c; gap: 4px; }
  .cat.file { height: 24px; padding-top: 1px; }
  .cat i { flex: 1; height: 1px; background: #a9b8dc; }
  .scroll { width: 15px; margin: 1px 2px 1px 0; background: #f0f0f0; display: flex; flex-direction: column; }
  .scroll i { margin-top: auto; height: 79px; background: #cdcdcd; margin-bottom: 12px; }
  .link { color: #0a62c9; text-decoration: underline; display: inline-block; margin-top: 8px; letter-spacing: -.7px; }
  .btns { display: flex; justify-content: flex-end; gap: 8px; padding: 8px 7px 0 0; }
  .btns span { width: 73px; height: 21px; line-height: 19px; text-align: center; border: 1px solid #adadad; background: #e1e1e1; }
  .btns .ok { border: 2px solid #0078d7; line-height: 17px; }
  .btns .dis { background: #ccc; border-color: #bfbfbf; color: #8b8b8b; }
  .mark-gps { position: absolute; left: 13px; top: 125px; width: 227px; height: 84px; border: 1px solid #f33; }

  .browser { position: absolute; left: 610px; top: 12px; width: 1180px; height: 800px; background: #fff; border-radius: 7px 0 0 0; box-shadow: 0 0 0 1px rgba(110,110,110,.8), 0 2px 26px rgba(0,0,0,.6); overflow: hidden; font-family: "DejaVu Sans", sans-serif; }
  .tabbar { background: #333031; height: 44px; display: flex; width: 1130px; border-bottom: 1px solid #222; overflow: hidden; font: 14.500px "Noto Sans", "Open Sans", sans-serif; color: #ddd; position: relative; }
  .prev { margin: 14px 18px 0 50px; width: 12px; }
  .tab { flex: none; width: 73px; height: 36px; margin: 4px 3px 0 0; padding-left: 2px; display: flex; align-items: center; gap: 6px; overflow: hidden; }
  .tab span { width: 35px; margin-left: -1px; overflow: hidden; white-space: nowrap; letter-spacing: -.35px; -webkit-mask-image: linear-gradient(90deg, #000 40%, transparent 100%); mask-image: linear-gradient(90deg, #000 40%, transparent 100%); }
  .tab.active { background: #fafafa; border-radius: 4px; color: #333; padding-left: 8px; margin-left: -6px; width: 72px; margin-right: 10px; }
  .tab.active span { width: 18px; margin-left: 0; }
  .tab text { font-family: "Liberation Sans", sans-serif; letter-spacing: 0; }
  .x { margin-left: -3px; }
  .tabend { position: absolute; right: 0; top: 0; width: 102px; height: 43px; background: #333031; border-left: 1px solid #5c595a; }
  .toolbar { height: 41px; background: #f9f9f9; border-bottom: 1px solid #c6c6c6; display: flex; align-items: center; }
  .navs { margin: 1px 0 0 16px; }
  .url { margin: 0 0 0 111px; width: 842px; height: 32px; background: #fff; border: 1px solid #c3c3c3; border-radius: 4px; display: flex; align-items: center; padding: 0 6px 0 7px; }
  .addr-text { margin: 0 auto 0 5px; font: 15px "Noto Sans", "Open Sans", sans-serif; color: #777; }
  .addr-text b { color: #111; font-weight: 400; }
  .brand { display: flex; height: 50px; padding: 6px 0 0 65px; width: 1130px; }
  .brand text { font-family: "Liberation Sans", sans-serif; }
  .login { margin: 6px 6px 0 auto; font-size: 17.500px; font-weight: 200; color: #1e88f7; line-height: 22px; }
  .brand i { width: 1px; height: 18px; background: #e0a060; margin-top: 9px; }
  .nav { display: flex; height: 42px; padding-left: 49px; border-bottom: 1px solid #e3e4e5; font-size: 14px; font-weight: 200; color: #1483ff; line-height: 42px; white-space: nowrap; }
  .nav span { padding: 0 17px; }
  .nav .cur { color: #666; padding: 0 15px; border: 1px solid #dee2e6; border-bottom: 0; border-radius: 4px 4px 0 0; background: #fff; height: 42px; line-height: 40px; margin-right: 1px; }
  .cols2 { display: flex; }
  .form { width: 360px; margin-left: 64px; color: #333; }
  .stub { height: 4px; border: 1px solid #dfe0e2; border-top: 0; border-radius: 0 0 4px 4px; }
  .btn { display: table; height: 35px; line-height: 34px; padding: 0 13px; border-radius: 4px; background: #007bff; color: #fff; font-size: 15px; white-space: nowrap; }
  .b1 { margin-top: 15px; }
  .b2 { height: 36px; margin-bottom: 15px; }
  .b3 { height: 36px; margin-top: 0; }
  hr { border: 0; border-top: 1px solid #e4e5e6; margin: 20px 0 9px; }
  hr.h2 { margin-top: 5px; }
  h4 { font-size: 18.900px; line-height: 21px; height: 33px; padding-top: 1px; font-weight: 700; color: #333; }
  h4.two { height: 54px; padding-top: 0; }
  .fr { display: flex; height: 50px; align-items: flex-start; }
  .fr label { width: 98px; font-weight: 700; font-size: 17px; line-height: 36px; white-space: nowrap; }
  .in { width: 262px; height: 35px; border: 1px solid #dcdee1; border-radius: 4px; box-shadow: inset 0 1px 1px rgba(0,0,0,.06); font-size: 15px; font-weight: 200; line-height: 33px; padding-left: 11px; color: #666; }
  .dms { display: flex; height: 79px; font-size: 17px; line-height: 35px; }
  .dms strong { width: 98px; white-space: nowrap; }
  .vals { display: flex; flex-wrap: wrap; width: 262px; align-items: flex-start; align-content: flex-start; font-size: 16px; }
  .radio { width: 14px; height: 14px; border: 2px solid #8f8f9d; border-radius: 50%; margin-top: 10px; }
  .radio.on { border-color: #e95420; background: radial-gradient(#e95420 0 3px, #fff 3.700px); }
  .c1 { width: 20px; padding-left: 4px; margin-right: 4px; }
  .c2 { width: 29px; padding-left: 4px; }
  .in.s { width: 36px; padding-left: 6px; }
  .in.s.w { width: 64px; padding-left: 6px; }
  .u1 { width: 20px; padding-left: 6px; }
  .u2 { width: 16px; padding-left: 5px; }
  .sec { width: 200px; line-height: 22px; }
  .map { position: relative; width: 676px; height: 427px; margin-left: 30px; overflow: hidden; }
  .land { width: 676px; height: 427px; }
  .pin { position: absolute; left: 371px; top: 168px; width: 9px; height: 9px; border-radius: 50%; background: #dc5438; }
  .pop { position: absolute; left: 188px; top: 22px; width: 375px; height: 134px; background: rgba(247,247,243,.96); border-radius: 5px; box-shadow: 0 10px 60px rgba(60,60,0,.46); padding: 10px 15px; color: #333; font: 14px/18px "Liberation Sans", sans-serif; }
  .pop::after { content: ""; position: absolute; left: 174px; top: 134px; border: 14px solid transparent; border-top: 16px solid #f7f7f3; border-bottom: 0; }
  .pop h5 { font: 700 18px/22px "DejaVu Sans", sans-serif; white-space: nowrap; }
  .pop em { font-style: normal; color: #fff; background: #adadad; display: inline-block; }
  .pop p { margin-top: 15px; height: 18px; }
  .pop p b { font: 700 13.800px/18px "DejaVu Sans", sans-serif; }
  .alt { display: block; margin-top: 22px; width: 104px; height: 36px; background: #007bff; border-radius: 4px; color: #fff; text-align: center; line-height: 32px; font-size: 15px; }
  .px { position: absolute; right: 16px; top: 7px; font: normal 700 17px/20px "Liberation Sans", sans-serif; color: #b0b0ac; }
  .redbox { position: absolute; left: 178px; top: 22px; width: 307px; height: 43px; border: 1px solid #f33; }
  .amaps { position: absolute; left: 9px; top: 402px; display: flex; align-items: center; font: 500 17px/20px Inter, sans-serif; color: #464b3e; letter-spacing: -.5px; }
  .legal { position: absolute; left: 593px; top: 407px; font: 10px/12px Inter, sans-serif; color: #666; text-decoration: underline; letter-spacing: -.3px; }
  .zoomer { position: absolute; left: 636px; top: 394px; width: 60px; height: 24px; border-radius: 9px; background: #fff; }
</style>
